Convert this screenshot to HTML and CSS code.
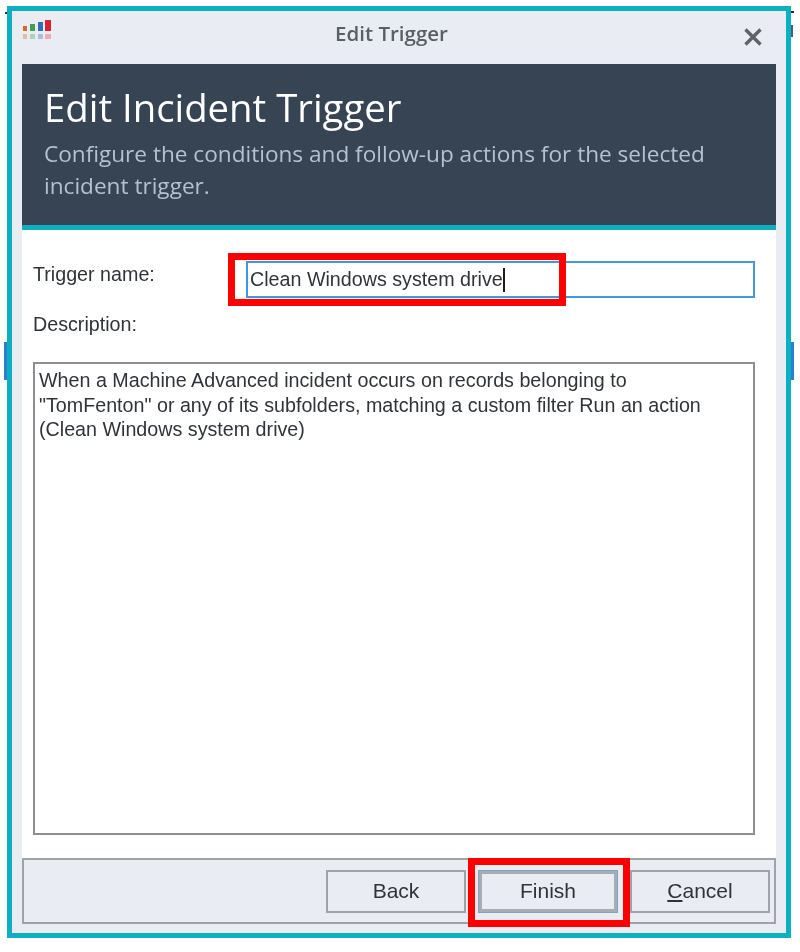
FILE: index.html
```html
<!DOCTYPE html>
<html lang="en">
<head>
  <meta charset="UTF-8" />
  <title>Edit Trigger</title>
  <link rel="stylesheet" href="styles.css">
</head>
<body>

  <!-- bits of the window behind the dialog -->
  <span class="edge-tick edge-left"></span>
  <span class="edge-tick edge-right"></span>
  <span class="edge-dot dot-tl"></span>
  <span class="edge-dot dot-tr"></span>
  <span class="edge-dot dot-r"></span>

  <div class="dialog">

    <!-- Title bar -->
    <div class="titlebar">
      <svg class="app-icon" width="30" height="24" viewBox="0 0 30 24">
        <rect x="1" y="7" width="4" height="5" fill="#d9662e"/>
        <rect x="8" y="5" width="5" height="7" fill="#3f9f5a"/>
        <rect x="16" y="3" width="5" height="9" fill="#2f70b8"/>
        <rect x="23" y="1" width="6" height="11" fill="#d8232f"/>
        <rect x="1" y="15" width="4" height="5" fill="#ecb9a2"/>
        <rect x="8" y="15" width="5" height="5" fill="#aad6b6"/>
        <rect x="16" y="15" width="5" height="5" fill="#a8c0e0"/>
        <rect x="23" y="15" width="6" height="5" fill="#efacb0"/>
      </svg>
      <span class="titlebar-text">Edit Trigger</span>
      <svg class="close-icon" width="18" height="18" viewBox="0 0 18 18">
        <path d="M1.5 1.5 L16.5 16.5 M16.5 1.5 L1.5 16.5" stroke="#5f6368" stroke-width="3.4" fill="none"/>
      </svg>
    </div>

    <!-- Banner -->
    <div class="banner">
      <h1>Edit Incident Trigger</h1>
      <p>Configure the conditions and follow-up actions for the selected<br>incident trigger.</p>
    </div>

    <!-- Form -->
    <div class="form">
      <div class="name-row">
        <label>Trigger name:</label>
        <div class="input">Clean Windows system drive<span class="caret"></span></div>
        <span class="mark mark-name"></span>
      </div>
      <label class="desc-label">Description:</label>
      <div class="textarea">When a Machine Advanced incident occurs on records belonging to<br>"TomFenton" or any of its subfolders, matching a custom filter Run an action<br>(Clean Windows system drive)</div>
    </div>

    <!-- Buttons -->
    <div class="footer">
      <button class="btn">Back</button>
      <button class="btn btn-default">Finish</button>
      <button class="btn"><u>C</u>ancel</button>
      <span class="mark mark-finish"></span>
    </div>

  </div>

</body>
</html>
```

FILE: styles.css
```css
:root {
  --teal: #0cb0c2;
  --panel: #e9ecf2;
  --slate: #364453;
  --line: #9fa2a6;
  --red: #fe0000;
}

* {
  margin: 0;
  padding: 0;
  box-sizing: border-box;
}

body {
  background: #ffffff;
  padding: 6px 9px 14px 7px;
  font-family: 'Liberation Sans', sans-serif;
  color: #30343a;
}

.dialog {
  width: 784px;
  height: 932px;
  border: 5px solid var(--teal);
  background: var(--panel);
  padding: 0 10px 9px;
  display: flex;
  flex-direction: column;
  /* the reference is an upscaled capture, so everything is a bit soft */
  filter: blur(0.45px);
}

.titlebar {
  height: 53px;
  flex: none;
  display: flex;
  align-items: center;
  justify-content: center;
  position: relative;
}

.titlebar-text {
  font-family: 'Open Sans', sans-serif;
  font-weight: 600;
  font-size: 20.5px;
  color: #585f69;
  margin-top: -10px;
  margin-right: 15px;
}

.app-icon {
  position: absolute;
  left: 0;
  top: 8px;
}

.close-icon {
  position: absolute;
  right: 14px;
  top: 17px;
}

.banner {
  height: 166px;
  flex: none;
  background: var(--slate);
  border-bottom: 5px solid var(--teal);
  padding: 12px 22px 0;
  font-family: 'Open Sans', sans-serif;
}

.banner h1 {
  font-size: 38.3px;
  font-weight: 400;
  line-height: 62px;
  color: #ffffff;
}

.banner p {
  font-size: 22.6px;
  line-height: 32px;
  color: #b3c2cd;
}

.form {
  flex: 1;
  background: #ffffff;
  padding: 31px 21px 23px 11px;
  display: flex;
  flex-direction: column;
  font-size: 19.7px;
}

.name-row {
  display: flex;
  height: 37px;
  flex: none;
  position: relative;
}

.name-row label {
  width: 213px;
  flex: none;
  padding-top: 2px;
}

.input {
  flex: 1;
  border: 2px solid #4596dc;
  padding: 3px 0 0 2px;
  line-height: 26px;
  white-space: nowrap;
}

.caret {
  display: inline-block;
  width: 2px;
  height: 24px;
  background: #1c1c1c;
  vertical-align: -6px;
}

.desc-label {
  flex: none;
  margin-top: 13px;
  line-height: 26px;
}

.textarea {
  flex: 1;
  margin-top: 25px;
  border: 2px solid #8e8f91;
  padding: 4px 4px;
  line-height: 24.5px;
}

.footer {
  height: 66px;
  flex: none;
  border: 2px solid var(--line);
  display: flex;
  justify-content: flex-end;
  align-items: center;
  gap: 12px;
  padding-right: 4px;
  position: relative;
}

.btn {
  width: 140px;
  height: 43px;
  border: 2px solid var(--line);
  background: var(--panel);
  font-family: 'Liberation Sans', sans-serif;
  font-size: 21px;
  color: #30343a;
}

.btn-default {
  border: 4px solid #a9adb1;
  outline: 1px solid #7fa3c2;
  outline-offset: -1px;
}

/* red annotation boxes drawn over the screenshot */
.mark {
  position: absolute;
  border: 7px solid var(--red);
}

.mark-name {
  left: 195px;
  top: -8px;
  width: 338px;
  height: 53px;
}

.mark-finish {
  right: 144px;
  top: -2px;
  width: 162px;
  height: 69px;
}

.edge-tick {
  position: absolute;
  top: 342px;
  width: 3px;
  height: 38px;
  background: #2a7fd0;
}

.edge-left { left: 4px; }
.edge-right { left: 791px; }

.edge-dot {
  position: absolute;
  background: #2b2f36;
}

.dot-tl { left: 5px; top: 12px; width: 2px; height: 2px; }
.dot-tr { left: 791px; top: 11px; width: 3px; height: 2px; }
.dot-r { left: 791px; top: 25px; width: 2px; height: 12px; background: #3c5f88; }
```
